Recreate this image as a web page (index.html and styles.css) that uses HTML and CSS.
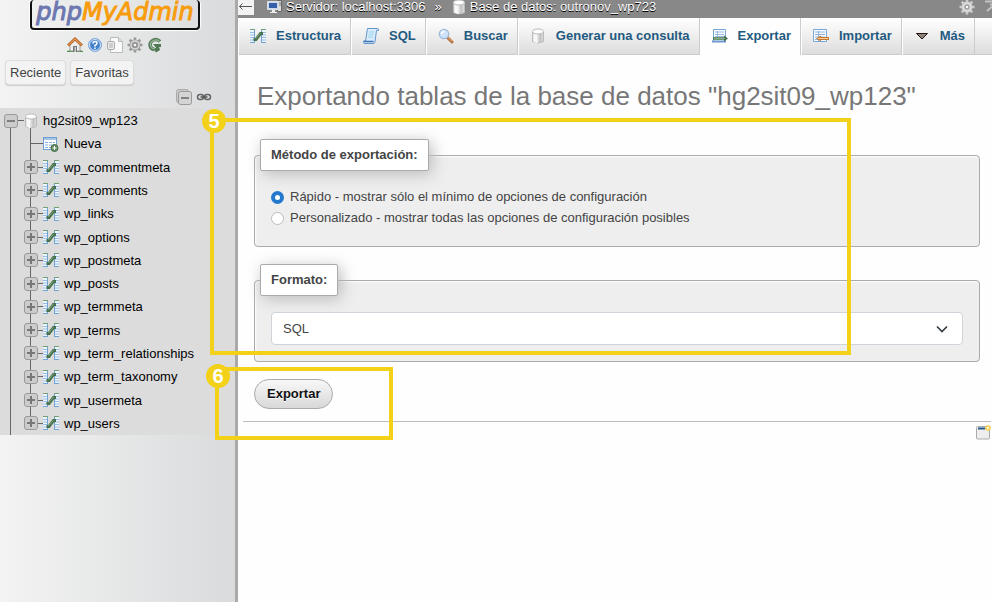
FILE: index.html
```html
<!DOCTYPE html>
<html lang="es">
<head>
<meta charset="utf-8">
<title>phpMyAdmin</title>
<link rel="stylesheet" href="styles.css">
</head>
<body>
<svg class="sprite" aria-hidden="true">
  <symbol id="i-home" viewBox="0 0 16 16"><path d="M0 14q8-3 16 0v1H0z" fill="#4f8f4a"/><path d="M3 7l5-4 5 4v7H3z" fill="#eee" stroke="#999"/><path d="M6 9h4v6H6z" fill="#777"/><path d="M7.500 10h1.500v5H7.500z" fill="#ccc"/><path d="M1 8.500L8 2l7 6.500" fill="none" stroke="#b96a2c" stroke-width="3"/><path d="M1.500 8L8 2l6.500 6" fill="none" stroke="#f0a868"/></symbol>
  <symbol id="i-help" viewBox="0 0 16 16"><circle cx="8" cy="8" r="6.500" fill="#4583ca" stroke="#85ace0"/><circle cx="8" cy="8" r="5.500" fill="none" stroke="#dce9fa"/><path d="M6 6.500q0-2 2-2t2 1.700Q10 7.500 8 8.500v1M8 10.500v1.500" fill="none" stroke="#fff" stroke-width="1.500"/></symbol>
  <symbol id="i-doc" viewBox="0 0 16 16"><path d="M3.500.5h8l4 4v11h-12z" fill="#fafafa" stroke="#bbb"/><path d="M11.500.5v4h4" fill="#ddd" stroke="#bbb"/><rect x=".5" y="4.500" width="7" height="8" rx="1.500" fill="#eee" stroke="#aaa"/><path d="M3 6v5M5 6v5" stroke="#aaa"/></symbol>
  <symbol id="i-gear" viewBox="0 0 16 16"><path d="M8 .5v15M.5 8h15M2.700 2.700l10.600 10.600M13.300 2.700L2.700 13.300" stroke="currentColor" stroke-width="2.600"/><circle cx="8" cy="8" r="5.500" fill="currentColor"/><circle cx="8" cy="8" r="4" fill="none" stroke="#ddd" stroke-width="1.500"/><circle cx="8" cy="8" r="2" fill="#f4f4f4" stroke="#888"/></symbol>
  <symbol id="i-reload" viewBox="0 0 16 16"><path d="M13 4.500Q10 1.500 6.500 3T3 8q.5 4 4.500 4.500" fill="none" stroke="#567c59" stroke-width="3.500"/><path d="M12.500 4.500Q10 2 6.500 3.500T3.500 8q.5 3.500 4 4" fill="none" stroke="#98b999" stroke-width="1.200"/><path d="M6 7h8v3h-2l1 3-4 2.500-2-3 2-2z" fill="#4f7952"/></symbol>
  <symbol id="i-collapse" viewBox="0 0 16 16"><rect x=".5" y=".5" width="12" height="13" rx="2" fill="#ccc" stroke="#aaa"/><rect x="2.500" y="2.500" width="13" height="13" rx="2" fill="#d4d4d4" stroke="#999"/><path d="M5 9h8" stroke="#666" stroke-width="1.500"/></symbol>
  <symbol id="i-link" viewBox="0 0 16 16"><rect x="1.500" y="5.500" width="6" height="5" rx="2.500" fill="none" stroke="#666" stroke-width="1.500"/><rect x="8.500" y="5.500" width="6" height="5" rx="2.500" fill="none" stroke="#666" stroke-width="1.500"/><path d="M4.500 8h7" stroke="#555" stroke-width="1.500"/></symbol>
  <symbol id="i-minus" viewBox="0 0 14 14"><rect x=".5" y=".5" width="13" height="13" rx="2.500" fill="#ccc" stroke="#999"/><path d="M3 7h8" stroke="#666" stroke-width="1.500"/></symbol>
  <symbol id="i-plus" viewBox="0 0 14 14"><rect x=".5" y=".5" width="13" height="13" rx="2.500" fill="#ccc" stroke="#999"/><path d="M3 7h8M7 3v8" stroke="#777" stroke-width="2"/></symbol>
  <symbol id="i-db" viewBox="0 0 16 16"><path d="M2.500 3.500v10q5.500 3 11 0v-10z" fill="#d8d8d8" stroke="#bbb"/><path d="M4.500 5v9M6.500 6v9" stroke="#f7f7f7" stroke-width="2"/><path d="M10.500 6v9" stroke="#c2c2c2" stroke-width="2"/><ellipse cx="8" cy="3.500" rx="5.500" ry="2.500" fill="#fff" stroke="#bbb"/></symbol>
  <symbol id="i-new" viewBox="0 0 16 16"><rect x=".5" y="1.500" width="13" height="12" fill="#fff" stroke="#6f9fd0"/><path d="M1 3h12" stroke="#a4c5e8" stroke-width="2"/><path d="M2 6.500h10M2 9h10M2 11.500h7" stroke="#84add9"/><path d="M5.500 5v8M9.500 5v8" stroke="#fff"/><circle cx="11.500" cy="12" r="3.500" fill="#5f8a62" stroke="#446d49"/><path d="M9.500 12h4M11.500 10v4" stroke="#fff"/></symbol>
  <symbol id="i-struct" viewBox="0 0 16 16"><path d="M0 1h5v14H0zM11 1h5v14h-5z" fill="#eef5fd"/><path d="M0 1.500h5M11 1.500h5" stroke="#739f75" stroke-width="1.200"/><path d="M4.500 2v13M11.500 2v13M0 14.500h5M11 14.500h5" stroke="#71a2d4"/><path d="M0 4.500h4M0 7h4M0 9.500h4M0 12h4M12 4.500h4M12 7h4M12 9.500h4M12 12h4" stroke="#98bce2"/><path d="M3.500 11.500h2.500l4.500-6H13" fill="none" stroke="#47704c" stroke-width="3"/><path d="M5.500 11l5-6" stroke="#7ca77d"/></symbol>
  <symbol id="i-server" viewBox="0 0 16 16"><path d="M10.500 1.500h4v11h-4z" fill="#ddd" stroke="#666"/><path d="M11 4h3M11 6h3" stroke="#777"/><path d="M.5 2.500h11v8H.5z" fill="#c9d9ef" stroke="#ddd"/><path d="M2 4h8v5H2z" fill="#345fa8"/><path d="M5 11h3v2h2v1H3v-1h2z" fill="#eee"/></symbol>
  <symbol id="i-sql" viewBox="0 0 16 16"><path d="M4.500.5H14q2 0 1.500 2h-2l-1.500 11q0 2-2 2H1Q0 15 .5 13h2z" fill="#d9ebfc" stroke="#6597ca"/><path d="M1 13.500h9.500" stroke="#3973b0" stroke-width="1.500"/><path d="M6 4h5M5.500 6.500h5M5 9h5" stroke="#a5ddeb" stroke-width="1.500"/></symbol>
  <symbol id="i-search" viewBox="0 0 16 16"><path d="M9 9l5 5" stroke="#b36f3d" stroke-width="3" stroke-linecap="round"/><path d="M9.500 9l4.500 4.500" stroke="#f3b680"/><circle cx="6" cy="6" r="4.700" fill="#cde3fb" stroke="#a0bad8" stroke-width="1.300"/><path d="M3.500 6q.5-2.500 3-2.500" stroke="#fff" fill="none" stroke-width="1.500"/></symbol>
  <symbol id="i-export" viewBox="0 0 16 16"><path d="M1.500 1.500h12v12h-12z" fill="#f8fbff" stroke="#79a7d7"/><path d="M3 4h9M3 6.500h9M3 8.500h9M5.500 3v7" stroke="#9bbbe0"/><path d="M0 13.500h14" stroke="#6c98cc" stroke-width="2"/><path d="M1 10.500h12" stroke="#41704a" stroke-width="2.500"/><path d="M12 7.500l4 3-4 3z" fill="#41704a"/><path d="M2 10.500h11" stroke="#86ab83"/></symbol>
  <symbol id="i-import" viewBox="0 0 16 16"><path d="M.5 1.500h13v12H.5z" fill="#f8fbff" stroke="#79a7d7"/><path d="M2 4h10M2 6.500h10M2 9h10M2 11.500h4M5.500 3v10" stroke="#8fb3dd"/><path d="M7 10.500h9" stroke="#c87b35" stroke-width="3"/><path d="M8 7.500l-5 3 5 3z" fill="#c87b35"/><path d="M5 10.500h10" stroke="#ffc98b"/></symbol>
  <symbol id="i-window" viewBox="0 0 16 16"><rect x="1.500" y="2.500" width="13" height="12.500" rx="1" fill="#eee" stroke="#aaa"/><path d="M3 4.500h7" stroke="#205991" stroke-width="2"/><circle cx="13" cy="4" r="2.800" fill="#f0ca3e"/><path d="M11.500 4h3M13 2.500v3" stroke="#fff"/></symbol>
</svg>
<div class="page">
  <aside class="sidebar">
    <a class="logo" href="#"><span class="php">php</span>MyAdmin</a>
    <nav class="quick" aria-label="Accesos">
      <a href="#" aria-label="Inicio"><svg class="icon"><use href="#i-home"/></svg></a>
      <a href="#" aria-label="Ayuda"><svg class="icon"><use href="#i-help"/></svg></a>
      <a href="#" aria-label="Documentación"><svg class="icon"><use href="#i-doc"/></svg></a>
      <a href="#" aria-label="Configuración"><svg class="icon"><use href="#i-gear"/></svg></a>
      <a href="#" aria-label="Recargar"><svg class="icon"><use href="#i-reload"/></svg></a>
    </nav>
    <div class="recent"><button type="button">Reciente</button><button type="button">Favoritas</button></div>
    <div class="tools">
      <a href="#" aria-label="Contraer"><svg class="icon"><use href="#i-collapse"/></svg></a>
      <a href="#" aria-label="Enlazar"><svg class="icon"><use href="#i-link"/></svg></a>
    </div>
    <ul class="tree">
      <li class="root"><svg class="toggle"><use href="#i-minus"/></svg><svg class="icon"><use href="#i-db"/></svg><a href="#">hg2sit09_wp123</a></li>
      <li class="new"><svg class="icon"><use href="#i-new"/></svg><a href="#">Nueva</a></li>
      <li><svg class="toggle"><use href="#i-plus"/></svg><svg class="icon"><use href="#i-struct"/></svg><a href="#">wp_commentmeta</a></li>
      <li><svg class="toggle"><use href="#i-plus"/></svg><svg class="icon"><use href="#i-struct"/></svg><a href="#">wp_comments</a></li>
      <li><svg class="toggle"><use href="#i-plus"/></svg><svg class="icon"><use href="#i-struct"/></svg><a href="#">wp_links</a></li>
      <li><svg class="toggle"><use href="#i-plus"/></svg><svg class="icon"><use href="#i-struct"/></svg><a href="#">wp_options</a></li>
      <li><svg class="toggle"><use href="#i-plus"/></svg><svg class="icon"><use href="#i-struct"/></svg><a href="#">wp_postmeta</a></li>
      <li><svg class="toggle"><use href="#i-plus"/></svg><svg class="icon"><use href="#i-struct"/></svg><a href="#">wp_posts</a></li>
      <li><svg class="toggle"><use href="#i-plus"/></svg><svg class="icon"><use href="#i-struct"/></svg><a href="#">wp_termmeta</a></li>
      <li><svg class="toggle"><use href="#i-plus"/></svg><svg class="icon"><use href="#i-struct"/></svg><a href="#">wp_terms</a></li>
      <li><svg class="toggle"><use href="#i-plus"/></svg><svg class="icon"><use href="#i-struct"/></svg><a href="#">wp_term_relationships</a></li>
      <li><svg class="toggle"><use href="#i-plus"/></svg><svg class="icon"><use href="#i-struct"/></svg><a href="#">wp_term_taxonomy</a></li>
      <li><svg class="toggle"><use href="#i-plus"/></svg><svg class="icon"><use href="#i-struct"/></svg><a href="#">wp_usermeta</a></li>
      <li class="last"><svg class="toggle"><use href="#i-plus"/></svg><svg class="icon"><use href="#i-struct"/></svg><a href="#">wp_users</a></li>
    </ul>
  </aside>
  <main class="main">
    <header class="crumbs">
      <button class="back" type="button" aria-label="Ocultar panel"><svg viewBox="0 0 16 16"><path d="M1 7.500h13M4.500 4.500l-3 3 3 3" fill="none" stroke="#555"/></svg></button>
      <svg class="icon"><use href="#i-server"/></svg><a href="#">Servidor: localhost:3306</a><span class="sep">»</span><svg class="icon"><use href="#i-db"/></svg><a href="#">Base de datos: outronov_wp723</a>
      <span class="crumb-tools"><svg class="icon"><use href="#i-gear"/></svg><svg class="icon" viewBox="0 0 16 16"><path d="M1 2.500h14M3 12l7-6M6 5.500h5v5" fill="none" stroke="#c4c4c4" stroke-width="2"/></svg></span>
    </header>
    <nav class="tabs">
      <a href="#"><svg class="icon"><use href="#i-struct"/></svg>Estructura</a>
      <a href="#"><svg class="icon"><use href="#i-sql"/></svg>SQL</a>
      <a href="#"><svg class="icon"><use href="#i-search"/></svg>Buscar</a>
      <a href="#"><svg class="icon"><use href="#i-db"/></svg>Generar una consulta</a>
      <a href="#" class="active" aria-current="page"><svg class="icon"><use href="#i-export"/></svg>Exportar</a>
      <a href="#"><svg class="icon"><use href="#i-import"/></svg>Importar</a>
      <a href="#"><svg class="icon" viewBox="0 0 16 16"><path d="M2.500 5.500h11L8 11z" fill="#8d8378" stroke="#211"/></svg>Más</a>
    </nav>
    <form class="content">
      <h1>Exportando tablas de la base de datos "hg2sit09_wp123"</h1>
      <fieldset>
        <legend>Método de exportación:</legend>
        <div class="choices">
          <label><input type="radio" name="method" checked>Rápido - mostrar sólo el mínimo de opciones de configuración</label>
          <label><input type="radio" name="method">Personalizado - mostrar todas las opciones de configuración posibles</label>
        </div>
      </fieldset>
      <fieldset>
        <legend>Formato:</legend>
        <div class="format">
          <select aria-label="Formato"><option>SQL</option></select>
          <svg class="chevron" viewBox="0 0 16 16"><path d="M3 5.500l5 5 5-5" fill="none" stroke="#343a40" stroke-width="1.600"/></svg>
        </div>
      </fieldset>
      <button class="submit" type="button">Exportar</button>
    </form>
    <footer><a href="#" aria-label="Abrir nueva ventana"><svg class="icon"><use href="#i-window"/></svg></a></footer>
  </main>
  <div class="mark mark-method"><span>5</span></div>
  <div class="mark mark-submit"><span>6</span></div>
</div>
</body>
</html>
```
FILE: styles.css
```css
* { box-sizing: border-box; }
body { margin: 0; font: 13px/20px "Liberation Sans", Arial, sans-serif; color: #444; background: #fefefe; }
a { color: inherit; text-decoration: none; }
svg { display: block; flex: none; }
button, select { font: inherit; color: inherit; }
.sprite { position: absolute; width: 0; height: 0; }
.icon { width: 16px; height: 16px; }
.page { position: relative; display: grid; grid-template-columns: 238px minmax(0, 1fr); min-height: 100vh; overflow: hidden; }

.sidebar { border-right: 3px solid #aaa; background: linear-gradient(to right, #f3f3f3, #d9dbdc); }
.logo { display: block; width: 170px; height: 30px; margin-left: 30px; border: 2px solid #111; border-top: 0; border-radius: 4px; font: italic 24px/24px "DejaVu Sans", sans-serif; -webkit-text-stroke: 1px currentColor; color: #f89c0e; text-align: center; box-shadow: 0 0 1px 1px #fff; }
.php { color: #6c78af; }
.quick { display: flex; gap: 4px; padding: 7px 0 7px 67px; color: #999; }
.recent { display: flex; gap: 4px; padding: 0 5px; }
.recent button { height: 25px; padding: 0 4px; border: 1px solid #ddd; border-radius: 4px; background: #f3f3f3; box-shadow: 0 1px 1px #ccc; }
.tools { display: flex; justify-content: flex-end; gap: 4px; padding: 4px 23px 3px 0; }
.tree { display: grid; grid-auto-rows: 1fr; min-height: 327px; margin: 0; padding: 1px 0 0; list-style: none; color: #000; background: #dcdcdc; }
.tree li { display: flex; align-items: center; padding-left: 24px; background: linear-gradient(#666, #666) 10px 0 / 1px 100% no-repeat, linear-gradient(#666, #666) 30px 0 / 1px 100% no-repeat, linear-gradient(#666, #666) 30px 50% / 14px 1px no-repeat; }
.tree .root { padding-left: 4px; background: linear-gradient(#666, #666) 10px 100% / 1px 50% no-repeat, linear-gradient(#666, #666) 30px 100% / 1px 50% no-repeat, linear-gradient(#666, #666) 10px 50% / 14px 1px no-repeat; }
.tree .new { padding-left: 43px; }
.tree .last { background-size: 1px 100%, 1px 50%, 14px 1px; }
.tree a { margin-left: 5px; padding-top: 1px; }
.tree .root a { margin-left: 4px; }
.toggle { width: 14px; height: 14px; margin-right: 5px; }

.crumbs { display: flex; align-items: center; height: 18px; padding-bottom: 4px; overflow: hidden; color: #fff; background: #888; text-shadow: 0 1px 0 #000; }
.crumbs > a { margin-left: 3px; }
.back { width: 16px; height: 16px; margin-right: 13px; padding: 0; border: 0; background: #f3f3f3; }
.sep { margin: 0 9px; }
.crumb-tools { display: flex; gap: 9px; margin: 0 -8px 0 auto; color: #ccc; }
.tabs { display: flex; height: 37px; border-bottom: 1px solid #ccc; background: linear-gradient(#fff, #ddd); font-weight: bold; color: #235a81; }
.tabs a { display: flex; align-items: center; gap: 10px; height: 37px; padding: 0 9px 2px 11px; border-right: 1px solid #ccc; border-left: 1px solid #fff; }
.tabs .active { background: #fefefe; }
.content { padding: 21px 12px 0 16px; }
h1 { margin: 0 0 23px 3px; font: 26px/40px "Liberation Sans", Arial, sans-serif; color: #777; }
fieldset { min-width: 0; margin: 0 0 17px; padding: 0 16px 16px; border: 1px solid #aaa; border-radius: 4px; background: #eee; box-shadow: inset 1px 1px 2px #fff; }
legend { margin-left: -11px; padding: 5px 10px; border: 1px solid #aaa; border-radius: 2px; background: #fff; font-weight: bold; box-shadow: 3px 3px 15px #bbb; }
.choices { display: grid; gap: 1px; padding: 16px 0 2px; }
.choices label { display: flex; align-items: center; }
.choices input { appearance: none; width: 13px; height: 13px; margin: 0 6px 0 0; border: 1px solid #bbb; border-radius: 50%; background: #fff; }
.choices input:checked { border: 4px solid #2479cf; }
.format { display: grid; align-items: center; padding-top: 16px; }
.format select, .chevron { grid-area: 1 / 1; }
.format select { appearance: none; width: 100%; height: 33px; padding: 0 11px; border: 1px solid #ced4da; border-radius: 4px; background: #fff; }
.chevron { width: 16px; height: 16px; justify-self: end; margin-right: 13px; pointer-events: none; }
.submit { display: block; height: 30px; padding: 0 12px; border: 1px solid #aaa; border-radius: 15px; background: linear-gradient(#f8f8f8, #d8d8d8); font-weight: bold; color: #111; text-shadow: 0 1px 0 #fff; }
footer { display: flex; justify-content: flex-end; margin: 12px 1px 0 5px; padding-top: 2px; border-top: 1px solid #bbb; }

.mark { position: absolute; border: 4px solid #f2d118; pointer-events: none; }
.mark span { position: absolute; width: 24px; height: 24px; border-radius: 50%; background: #f2d118; color: #fff; font: bold 20px/24px "Liberation Sans", Arial, sans-serif; text-align: center; }
.mark-method { left: 210px; top: 118px; width: 641px; height: 237px; }
.mark-method span { left: -12px; top: -13px; }
.mark-submit { left: 215px; top: 367px; width: 178px; height: 73px; }
.mark-submit span { left: -13px; top: -7px; }
```
